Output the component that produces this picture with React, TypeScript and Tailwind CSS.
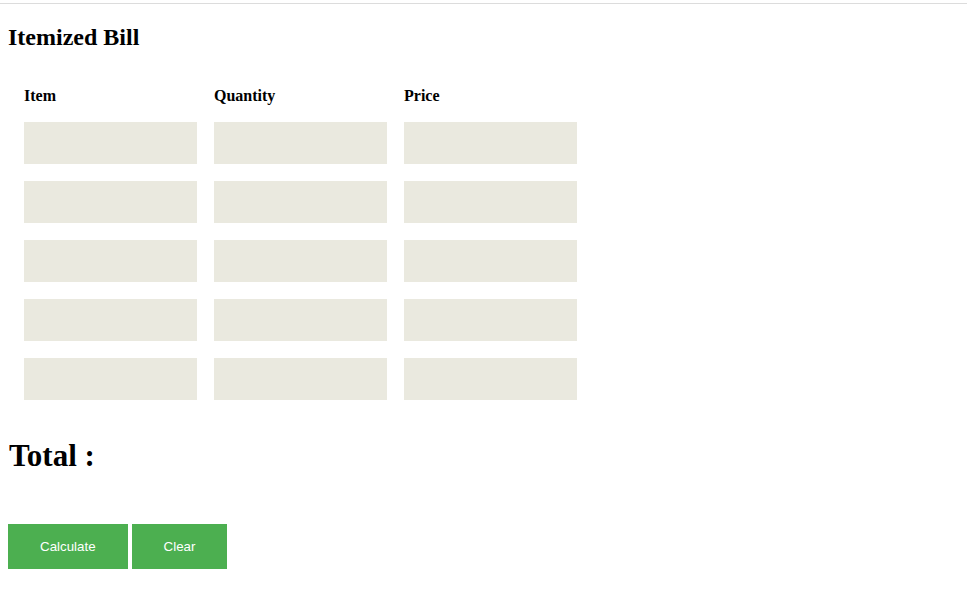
export default function App() {
  const rows = [0, 1, 2, 3, 4];
  const cols = ['Item', 'Quantity', 'Price'];

  return (
    <div className="min-h-[599px] bg-white text-black" style={{ fontFamily: '"Liberation Serif", serif' }}>
      <div className="pt-[3px]">
        <div className="border-t border-[#dcdcdc]" />
      </div>
      <div className="px-2">
        <h2 className="mt-[19px] text-[24px] font-bold leading-[28px]">Itemized Bill</h2>

        <div className="mt-[35px] pl-4">
          <div className="flex gap-[17px]">
            {cols.map((c) => (
              <div key={c} className="w-[173px] text-[16px] font-bold leading-[20px]">
                {c}
              </div>
            ))}
          </div>
          <div className="mt-[16px] flex flex-col gap-[17px]">
            {rows.map((r) => (
              <div key={r} className="flex gap-[17px]">
                {cols.map((c) => (
                  <input key={c} type="text" className="h-[42px] w-[173px] bg-[#eae9df] outline-none" />
                ))}
              </div>
            ))}
          </div>
        </div>

        <h1 className="mt-[38px] pl-[1px] text-[31px] font-bold leading-[36px]">Total :</h1>

        <div className="mt-[50px] flex gap-1" style={{ fontFamily: '"Liberation Sans", Arial, sans-serif' }}>
          <button className="bg-[#4caf50] px-8 py-[15px] text-[13.33px] leading-[15px] text-white">Calculate</button>
          <button className="bg-[#4caf50] px-8 py-[15px] text-[13.33px] leading-[15px] text-white">Clear</button>
        </div>
      </div>
    </div>
  );
}
